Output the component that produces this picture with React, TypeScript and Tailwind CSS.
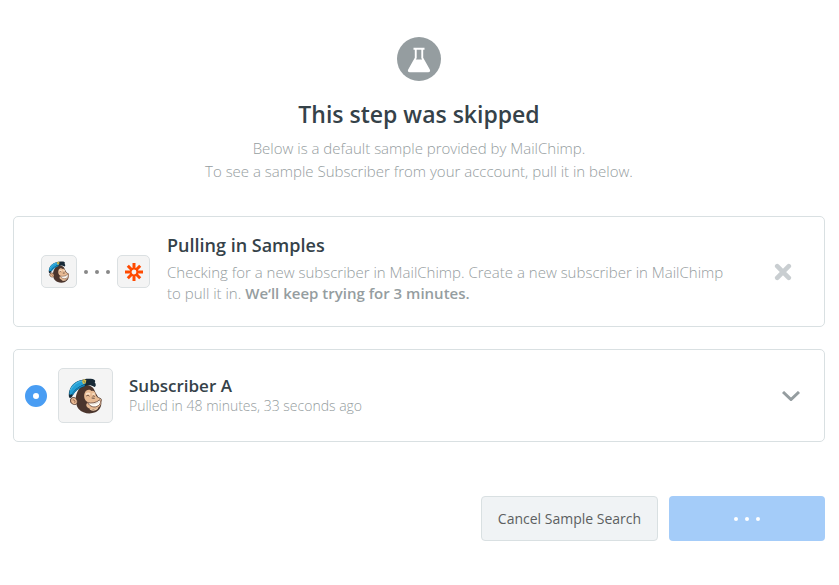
import React from "react";

function MonkeyLogo({ className }: { className: string }) {
  return (
    <svg viewBox="0 0 105 108" className={className} role="img" aria-label="MailChimp">
      <path d="M44 22 C58 18 76 24 80 38 C83 46 88 52 91 58 C101 60 103 66 100 72 C101 84 96 96 82 103 C66 109 44 107 32 93 C27 87 26 82 25 78 C12 82 4 74 7 64 C9 58 17 56 23 60 C25 46 32 30 44 22 Z" fill="#4b352d" />
      <path d="M8 66 C9 58 19 56 25 63 C29 69 29 76 24 79 C15 82 7 75 8 66 Z" fill="#e9b992" stroke="#4b352d" strokeWidth="2" />
      <path d="M14 66 C19 64 23 70 20 74" fill="none" stroke="#8c5f49" strokeWidth="3" />
      <path d="M50 45 C54 34 66 33 70 39 C78 37 83 43 83 50 C85 55 90 60 97 62 C103 67 99 81 93 87 C84 96 66 96 57 87 C53 82 55 76 60 73 C50 68 46 56 50 45 Z" fill="#e8bb94" />
      <path d="M54 50 C58 46 63 46 66 49 M73 49 C76 47 79 48 80 50" fill="none" stroke="#fbe3ca" strokeWidth="5" />
      <path d="M55 54 C59 51 62 52 64 55 M74 55 C77 53 79 54 80 56 M71 60 L80 61" fill="none" stroke="#4b352d" strokeWidth="2.5" />
      <path d="M59 74 C71 77 86 74 94 66 C101 68 97 79 91 83 C80 91 65 86 59 74 Z" fill="#fffdf8" stroke="#6a4739" strokeWidth="2.5" />
      <path d="M72 78 C81 79 89 75 95 71" fill="none" stroke="#c9b7a8" strokeWidth="1.5" />
      <path d="M66 93 C74 98 83 96 89 91" fill="none" stroke="#f3cfac" strokeWidth="4" />
      <path d="M3 57 C-1 36 14 12 38 7 C48 2 62 1 74 3 C82 5 83 10 80 13 C85 19 84 25 79 27 C70 20 58 20 47 26 C32 31 21 39 15 51 C11 60 5 62 3 57 Z" fill="#172936" />
      <path d="M4 47 C4 27 19 10 42 7 C49 9 52 13 53 18 C36 22 21 33 11 49 C7 51 4 50 4 47 Z" fill="#229fd5" />
      <path d="M7 37 C15 22 28 12 42 9" fill="none" stroke="#55bce4" strokeWidth="3" />
      <path d="M13 50 C21 37 35 27 50 22" fill="none" stroke="#1584b8" strokeWidth="5" />
      <path d="M42 9 L48 3 L55 7 L53 16 L45 18 Z" fill="#d8bd4e" />
      <path d="M46 9 L51 13" stroke="#5d7b54" strokeWidth="3" />
    </svg>
  );
}

function ZapierLogo() {
  return (
    <svg viewBox="0 0 18 18" className="size-[18px]" fill="none" stroke="#ff4a00" strokeWidth="3" role="img" aria-label="Zapier">
      <path d="M9 0v6M9 12v6M0 9h6M12 9h6M2.8 2.8L7 7M11 11l4.2 4.2M15.2 2.8L11 7M7 11l-4.2 4.2" />
      <circle cx="9" cy="9" r="3.3" strokeWidth="1.8" />
    </svg>
  );
}

function Dots({ className }: { className: string }) {
  return (
    <span className="flex items-center gap-[7px]" aria-hidden="true">
      {[0, 1, 2].map((dot) => (
        <span key={dot} className={`size-1 rounded-full ${className}`} />
      ))}
    </span>
  );
}

export default function App() {
  return (
    <main className="bg-white pt-[37px] pr-[14px] pb-11 pl-[13px] font-['Open_Sans',sans-serif] text-[#354249]">
      <header className="flex flex-col items-center text-center">
        <svg viewBox="0 0 44 44" className="size-11" aria-hidden="true">
          <circle cx="22" cy="22" r="22" fill="#959da0" />
          <path d="M16.5 10.8h11v1.9h-1.3v8.1l6.6 11.6c.8 1.5 0 2.8-1.6 2.8H12.8c-1.6 0-2.4-1.3-1.6-2.8l6.6-11.6v-8.1h-1.3z" fill="#fff" />
          <path d="M19.7 12.7h4.6v8.4l.8 1.5h-6.2l.8-1.5z" fill="#959da0" />
        </svg>
        <h1 className="mt-[15px] text-[23px] leading-9 font-semibold">This step was skipped</h1>
        <p className="mt-[5px] text-[15px] leading-[23px] font-light text-[#959da0]">
          Below is a default sample provided by MailChimp.
          <br />
          To see a sample Subscriber from your acccount, pull it in below.
        </p>
      </header>

      <section className="mt-[33px] flex items-center rounded-[5px] border border-[#d9e0e2] py-4 pr-8 pl-[27px]">
        <div className="flex shrink-0 items-center gap-[7px]">
          <span className="flex h-[33px] w-9 items-center justify-center rounded-[5px] border border-[#dbe0e2] bg-[#f4f4f4]">
            <MonkeyLogo className="h-[22px] w-[22px]" />
          </span>
          <Dots className="bg-[#888]" />
          <span className="flex size-[33px] items-center justify-center rounded-[5px] border border-[#dbe0e2] bg-[#f4f4f4]">
            <ZapierLogo />
          </span>
        </div>
        <div className="ml-[17px] min-w-0 flex-1 pb-[6px]">
          <h2 className="text-lg leading-6 font-semibold">Pulling in Samples</h2>
          <p className="mt-[5px] text-[15px] leading-[21px] font-light text-[#959da0]">
            Checking for a new subscriber in MailChimp. Create a new subscriber in MailChimp to pull it in.{" "}
            <strong className="font-semibold">We‘ll keep trying for 3 minutes.</strong>
          </p>
        </div>
        <button type="button" aria-label="Stop pulling in samples" className="ml-10 shrink-0">
          <svg viewBox="0 0 18 18" className="size-[18px]" fill="none" stroke="#c9ced1" strokeWidth="4.6" strokeLinecap="round">
            <path d="M3.2 3.2l11.6 11.6M14.8 3.2L3.2 14.8" />
          </svg>
        </button>
      </section>

      <section className="mt-[22px] flex items-center rounded-[5px] border border-[#d9e0e2] py-[18px] pr-6 pl-[11px]">
        <label className="flex min-w-0 flex-1 items-center">
          <input
            type="radio"
            name="sample"
            defaultChecked
            className="size-[22px] shrink-0 appearance-none rounded-full border-8 border-[#499df3] bg-white"
          />
          <span className="ml-[11px] flex size-[55px] shrink-0 items-center justify-center rounded-[5px] border border-[#dbe0e2] bg-[#f4f4f4]">
            <MonkeyLogo className="h-9 w-[35px]" />
          </span>
          <span className="ml-4 flex flex-col">
            <span className="text-[17px] leading-5 font-semibold">Subscriber A</span>
            <span className="text-sm leading-5 font-light text-[#959da0]">Pulled in 48 minutes, 33 seconds ago</span>
          </span>
        </label>
        <button type="button" aria-label="Show sample details" className="shrink-0">
          <svg viewBox="0 0 18 10" className="h-[10px] w-[18px]" fill="none" stroke="#959da0" strokeWidth="3">
            <path d="M1 1l8 7.5L17 1" />
          </svg>
        </button>
      </section>

      <footer className="mt-[54px] flex justify-end gap-[11px]">
        <button type="button" className="h-[45px] min-w-[177px] rounded-sm border border-[#d9e0e2] bg-[#f0f3f5] px-[14px] text-sm text-[#5c5f61]">
          Cancel Sample Search
        </button>
        <button type="button" aria-label="Loading" className="flex h-[45px] w-[156px] items-center justify-center rounded-sm bg-[#a4ccf9]">
          <Dots className="bg-white" />
        </button>
      </footer>
    </main>
  );
}
